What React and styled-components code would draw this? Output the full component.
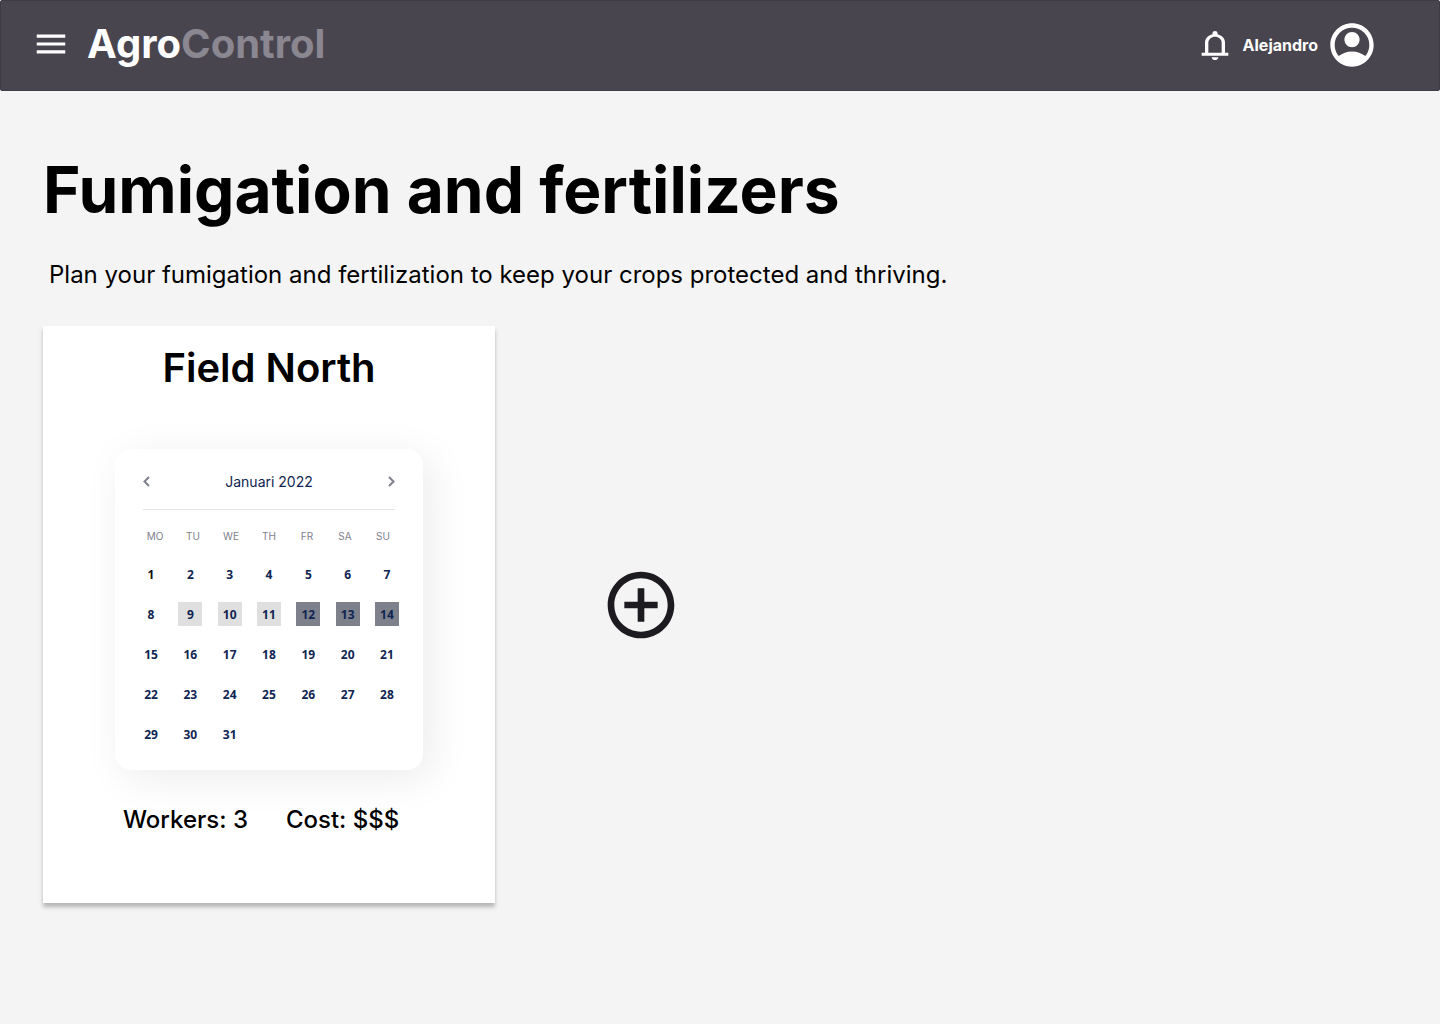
import React from "react";
import styled, { createGlobalStyle } from "styled-components";

const GlobalStyle = createGlobalStyle`
  *, *::before, *::after { box-sizing: border-box; }
  body {
    margin: 0;
    background: #f4f4f4;
    color: #000;
    font-family: Inter, "Liberation Sans", sans-serif;
  }
  h1, h2, p { margin: 0; }
  button {
    display: flex;
    align-items: center;
    justify-content: center;
    padding: 0;
    border: 0;
    background: none;
    color: inherit;
    font: inherit;
    cursor: pointer;
  }
  svg { display: block; fill: currentColor; }
`;

const TopBar = styled.header`
  display: flex;
  align-items: center;
  justify-content: space-between;
  height: 91px;
  padding: 0 61px 1px 31px;
  border: 1px solid #3f3b45;
  border-radius: 2px;
  background: #49454f;
  color: #fff;
`;

const BarGroup = styled.div`
  display: flex;
  align-items: center;
  gap: ${({ $gap }) => $gap}px;
`;

const Logo = styled.a`
  padding-bottom: 2px;
  color: #fff;
  font-size: 40px;
  font-weight: 700;
  line-height: 48px;
  text-decoration: none;
`;

const LogoAccent = styled.span`
  color: #8a8791;
`;

const MenuButton = styled.button`
  padding-bottom: 3px;
`;

const UserName = styled.span`
  font-size: 16px;
  font-weight: 700;
  line-height: 20px;
`;

const Main = styled.main`
  padding: 60px 43px;
`;

const Title = styled.h1`
  font-size: 64px;
  font-weight: 700;
  line-height: 77px;
`;

const Subtitle = styled.p`
  padding: 32px 0 0 6px;
  font-size: 24px;
  line-height: 30px;
`;

const Fields = styled.section`
  display: flex;
  flex-wrap: wrap;
  align-items: center;
  gap: 106px;
  padding-top: 36px;
`;

const FieldCard = styled.article`
  display: flex;
  flex-direction: column;
  align-items: center;
  width: 452px;
  padding: 18px 72px 68px;
  background: #fff;
  box-shadow: 0 4px 4px rgba(0, 0, 0, 0.25);
`;

const FieldName = styled.h2`
  font-size: 40px;
  font-weight: 600;
  line-height: 48px;
`;

const Calendar = styled.div`
  align-self: stretch;
  margin-top: 57px;
  padding: 24px;
  border-radius: 16px;
  background: #fff;
  box-shadow: 8px 8px 40px rgba(0, 0, 0, 0.08);
`;

const MonthBar = styled.div`
  display: flex;
  align-items: flex-start;
  justify-content: space-between;
  margin: 0 4px 18px;
  padding-bottom: 18px;
  border-bottom: 1px solid #e4e5e7;
  color: #7e818c;
`;

const PageButton = styled.button`
  height: 17px;
`;

const MonthName = styled.span`
  color: #0f2552;
  font-size: 14px;
  line-height: 18px;
`;

const Dates = styled.table`
  display: block;
  border-collapse: collapse;
`;

const WeekdayHead = styled.thead`
  display: block;
  padding-bottom: 18px;
`;

const Weeks = styled.tbody`
  display: grid;
  gap: 16px;
`;

const WeekRow = styled.tr`
  display: grid;
  grid-template-columns: repeat(7, ${({ $cell }) => $cell}px);
  justify-content: space-between;
`;

const Weekday = styled.th`
  padding: 0;
  color: #7e818c;
  font-size: 10px;
  font-weight: 400;
  line-height: 16px;
  text-align: center;
`;

const shades = { light: "#dfdfdf", dark: "#7e818c" };

const Day = styled.td`
  height: 24px;
  padding: 1px 0 0;
  background: ${({ $shade }) => shades[$shade] || "transparent"};
  color: ${({ $first }) => ($first ? "#111" : "#0f2552")};
  font-family: "Noto Sans", "Open Sans", sans-serif;
  font-size: 12px;
  font-weight: 700;
  line-height: 24px;
  text-align: center;
`;

const Facts = styled.div`
  display: flex;
  align-self: stretch;
  gap: 38px;
  padding: 35px 0 0 8px;
`;

const Fact = styled.p`
  font-size: 24px;
  font-weight: 500;
  line-height: 30px;
  white-space: nowrap;
`;

const AddButton = styled.button`
  && { padding-bottom: 19px; }
  color: #1d1b20;
`;

const MaterialIcon = ({ width, height = width, d }) => (
  <svg width={width} height={height} viewBox="0 0 24 24" preserveAspectRatio="none" aria-hidden="true">
    <path d={d} />
  </svg>
);

const icons = {
  menu: "M3 18h18v-2H3v2zm0-5h18v-2H3v2zm0-7v2h18V6H3z",
  bell: "M4 19v-2h2v-7c0-1.38.42-2.61 1.25-3.69S9.17 4.53 10.5 4.2v-.7c0-.42.15-.77.44-1.06S11.58 2 12 2s.77.15 1.06.44.44.64.44 1.06v.7c1.33.33 2.42 1.03 3.25 2.11S18 8.62 18 10v7h2v2H4zm8 3c-.55 0-1.02-.2-1.41-.59S10 20.55 10 20h4c0 .55-.2 1.02-.59 1.41S12.55 22 12 22zm-4-5h8v-7c0-1.1-.39-2.04-1.18-2.82S13.1 6 12 6s-2.04.39-2.82 1.18S8 8.9 8 10v7z",
  account: "M5.85 17.1c.85-.65 1.8-1.16 2.85-1.54S10.85 15 12 15s2.25.19 3.3.56 2 .89 2.85 1.54c.58-.68 1.04-1.46 1.36-2.33S20 12.98 20 12c0-2.22-.78-4.1-2.34-5.66S14.22 4 12 4s-4.1.78-5.66 2.34S4 9.78 4 12c0 .98.16 1.9.49 2.78s.78 1.65 1.36 2.32zM12 13c-.98 0-1.81-.34-2.49-1.01S8.5 10.48 8.5 9.5s.34-1.81 1.01-2.49S11.02 6 12 6s1.81.34 2.49 1.01S15.5 8.52 15.5 9.5s-.34 1.81-1.01 2.49S12.98 13 12 13zm0 9C6.48 22 2 17.52 2 12S6.48 2 12 2s10 4.48 10 10-4.48 10-10 10z",
  add: "M11 17h2v-4h4v-2h-4V7h-2v4H7v2h4v4zm1 5C6.48 22 2 17.52 2 12S6.48 2 12 2s10 4.48 10 10-4.48 10-10 10zm0-2c4.42 0 8-3.58 8-8s-3.58-8-8-8-8 3.58-8 8 3.58 8 8 8z",
};

const ChevronPath = styled.path`
  fill: none;
  stroke: currentColor;
  stroke-width: 2;
`;

const Chevron = ({ d }) => (
  <svg width="7" height="11" viewBox="0 0 7 11" aria-hidden="true">
    <ChevronPath d={d} />
  </svg>
);

const weekdays = ["MO", "TU", "WE", "TH", "FR", "SA", "SU"];
const weeks = [0, 7, 14, 21, 28].map((start) =>
  weekdays.map((_, i) => start + i + 1).filter((day) => day <= 31)
);
const shadeOf = (day) => {
  if (day >= 9 && day <= 11) return "light";
  if (day >= 12 && day <= 14) return "dark";
  return undefined;
};

export default function App() {
  return (
    <>
      <GlobalStyle />
      <TopBar>
        <BarGroup $gap={17}>
          <MenuButton type="button" aria-label="Menu">
            <MaterialIcon width={38} d={icons.menu} />
          </MenuButton>
          <Logo href="#">Agro<LogoAccent>Control</LogoAccent></Logo>
        </BarGroup>
        <BarGroup $gap={8}>
          <button type="button" aria-label="Notifications">
            <MaterialIcon width={40} height={35} d={icons.bell} />
          </button>
          <UserName>Alejandro</UserName>
          <button type="button" aria-label="Account">
            <MaterialIcon width={52} d={icons.account} />
          </button>
        </BarGroup>
      </TopBar>
      <Main>
        <Title>Fumigation and fertilizers</Title>
        <Subtitle>Plan your fumigation and fertilization to keep your crops protected and thriving.</Subtitle>
        <Fields>
          <FieldCard>
            <FieldName>Field North</FieldName>
            <Calendar>
              <MonthBar>
                <PageButton type="button" aria-label="Previous month">
                  <Chevron d="M6 1L1.5 5.5L6 10" />
                </PageButton>
                <MonthName>Januari 2022</MonthName>
                <PageButton type="button" aria-label="Next month">
                  <Chevron d="M1 1L5.5 5.5L1 10" />
                </PageButton>
              </MonthBar>
              <Dates>
                <WeekdayHead>
                  <WeekRow $cell={32}>
                    {weekdays.map((name) => <Weekday key={name} scope="col">{name}</Weekday>)}
                  </WeekRow>
                </WeekdayHead>
                <Weeks>
                  {weeks.map((week) => (
                    <WeekRow key={week[0]} $cell={24}>
                      {week.map((day) => (
                        <Day key={day} $shade={shadeOf(day)} $first={day === 1}>{day}</Day>
                      ))}
                    </WeekRow>
                  ))}
                </Weeks>
              </Dates>
            </Calendar>
            <Facts>
              <Fact>Workers: 3</Fact>
              <Fact>Cost: $$$</Fact>
            </Facts>
          </FieldCard>
          <AddButton type="button" aria-label="Add field">
            <MaterialIcon width={80} d={icons.add} />
          </AddButton>
        </Fields>
      </Main>
    </>
  );
}
